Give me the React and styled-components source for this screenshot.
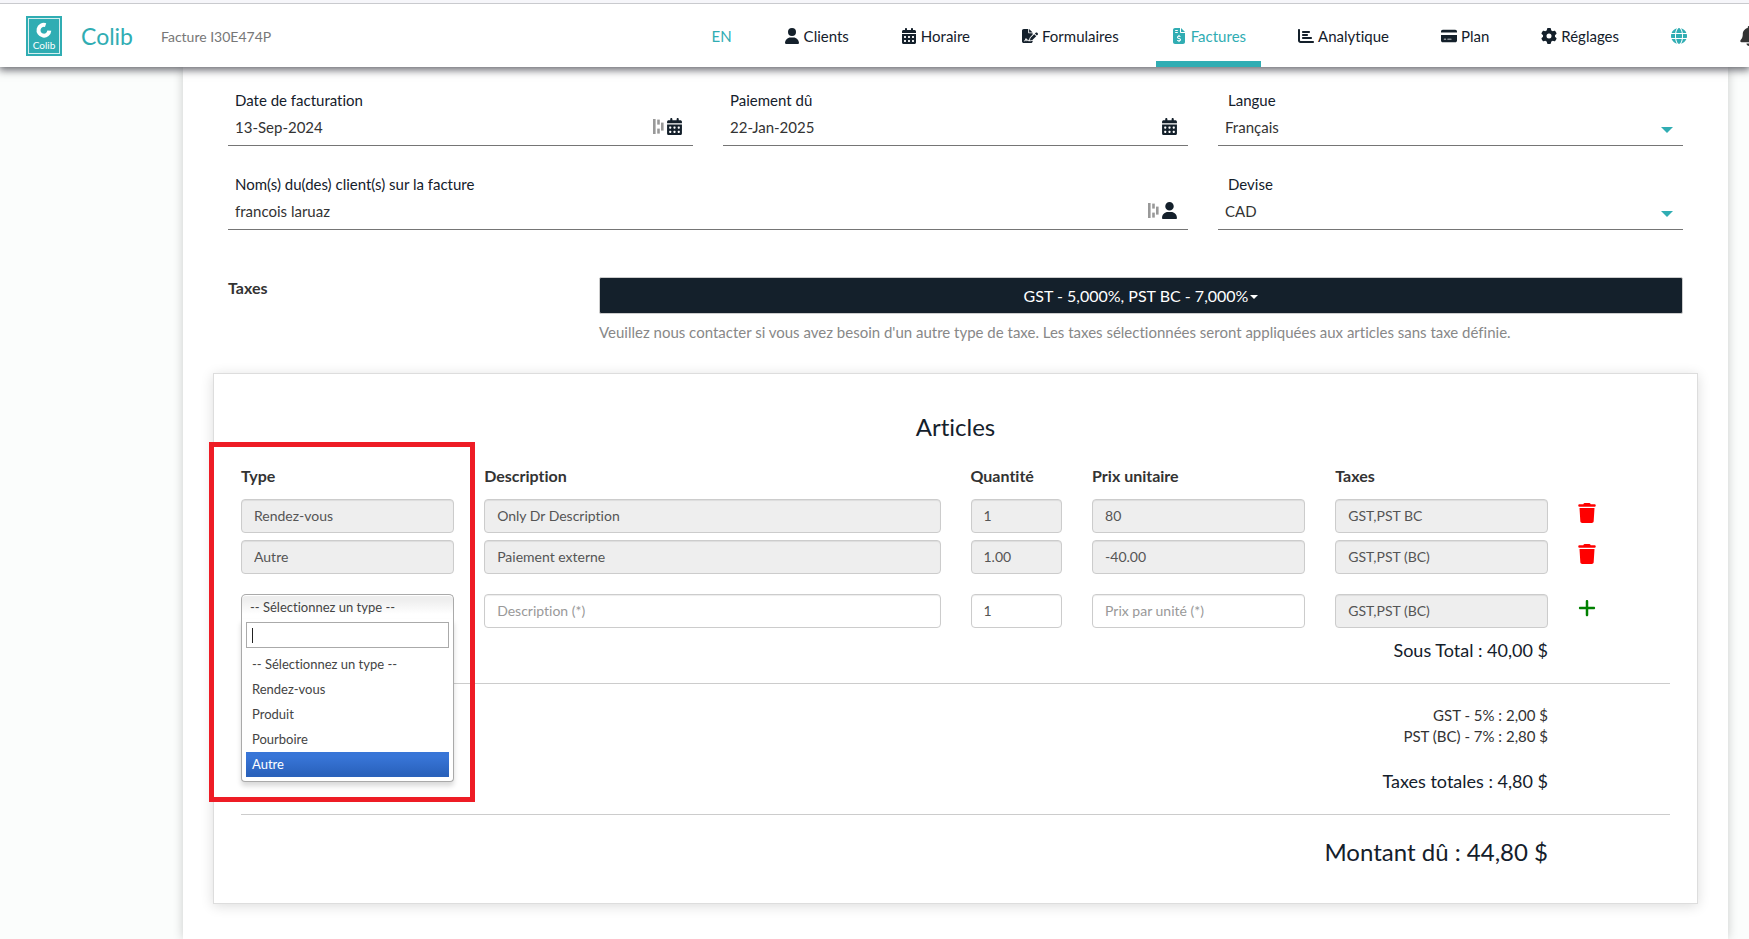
import { useState } from "react";
import styled, { createGlobalStyle } from "styled-components";
import {
  FaBell,
  FaCalendarDays,
  FaChartBar,
  FaCreditCard,
  FaFileInvoiceDollar,
  FaFileSignature,
  FaGear,
  FaGlobe,
  FaPlus,
  FaTrash,
  FaUser,
} from "react-icons/fa6";

const teal = "#30adb3";
const navy = "#14202b";

const GlobalStyle = createGlobalStyle`
  *, *::before, *::after {
    box-sizing: border-box;
  }

  body {
    margin: 0;
    overflow-x: hidden;
    background: #fbfdfc;
    color: #333;
    font-family: Lato, "Liberation Sans", sans-serif;
    font-size: 15px;
    font-variant-ligatures: none;
    line-height: 20px;
  }

  button, input, select {
    font-family: inherit;
    font-variant-ligatures: none;
    margin: 0;
  }
`;

const Page = styled.div`
  display: flex;
  flex-direction: column;
  min-height: 100vh;
  overflow: hidden;
  border-top: 3px solid #f6f6fa;
`;

/* ---------- header ---------- */

const Header = styled.header`
  display: flex;
  align-items: stretch;
  height: 64px;
  padding-left: 26px;
  background: #fff;
  border-top: 1px solid #c9cace;
  box-shadow: 0 2px 8px 1px rgba(20, 20, 30, 0.65);
  z-index: 2;
`;

const Brand = styled.a`
  display: flex;
  align-items: center;
  gap: 19px;
  color: ${teal};
  font-size: 23px;
  text-decoration: none;
`;

const PageTitle = styled.span`
  align-self: center;
  margin-left: 28px;
  padding-top: 2px;
  color: #777;
  font-size: 14px;
`;

const Nav = styled.nav`
  display: flex;
  gap: 22px;
  margin: 0 -25px 0 auto;
`;

const NavLink = styled.a`
  display: flex;
  align-items: center;
  gap: 4px;
  padding: 6px 15px 0;
  border-bottom: 6px solid ${({ $active }) => ($active ? teal : "transparent")};
  color: ${({ $teal, $active }) => ($teal || $active ? teal : navy)};
  font-size: 15px;
  text-decoration: none;

  svg {
    height: 16px;
    width: auto;
  }
`;

const BellLink = styled(NavLink)`
  color: #333;

  svg {
    height: 20px;
  }
`;

/* ---------- invoice form ---------- */

const Panel = styled.main`
  flex: 1;
  margin: 0 21px 0 183px;
  padding: 22px 30px 34px;
  background: #fff;
  box-shadow: 0 0 10px rgba(0, 0, 0, 0.2);
`;

const Fields = styled.div`
  display: grid;
  grid-template-columns: repeat(3, minmax(0, 1fr));
  gap: 27px 30px;
  padding: 0 15px;
`;

const Field = styled.div`
  grid-column: span ${({ $span }) => $span || 1};
  display: flex;
  flex-direction: column;
  border-bottom: 1px solid #757575;

  label {
    padding: 0 ${({ $wide }) => ($wide ? 10 : 7)}px;
    line-height: 22px;
    color: ${navy};
  }
`;

const FieldLine = styled.div`
  display: flex;
  align-items: center;
  gap: 2px;
  height: 34px;
  padding: 0 10px 3px 7px;
  color: ${navy};

  svg {
    flex: none;
  }
`;

const LineInput = styled.input`
  flex: 1;
  min-width: 0;
  height: 31px;
  padding: 0;
  border: 0;
  outline: 0;
  background: transparent;
  color: #333;
  font-size: 15px;
`;

const LineSelect = styled.select`
  flex: 1;
  height: 31px;
  padding: 0;
  border: 0;
  appearance: none;
  background: transparent;
  color: #333;
  font-size: 15px;
`;

const Caret = styled.span`
  margin-top: ${({ $drop }) => $drop || 0}px;
  border: solid transparent;
  border-width: ${({ $size }) => $size}px ${({ $size }) => $size}px 0;
  border-top-color: ${({ $color }) => $color};
`;

const TaxRow = styled.div`
  display: grid;
  grid-template-columns: 341px minmax(0, 1fr);
  column-gap: 30px;
  padding: 47px 15px 0;

  label {
    font-size: 16px;
    font-weight: bold;
    line-height: 22px;
  }
`;

const TaxButton = styled.button`
  display: flex;
  align-items: center;
  justify-content: center;
  gap: 2px;
  width: 100%;
  height: 37px;
  padding: 0 0 1px;
  border: 1px solid #ccc;
  border-radius: 2px;
  background: ${navy};
  color: #fff;
  font-size: 16px;
`;

const Help = styled.p`
  margin: 8px 0 0;
  color: #888;
`;

/* ---------- articles ---------- */

const Card = styled.section`
  position: relative;
  margin-top: 31px;
  padding: 38px 27px 35px;
  border: 1px solid #ddd;
  box-shadow: 0 2px 12px rgba(0, 0, 0, 0.14);
`;

const CardTitle = styled.h2`
  margin: 0 0 24px;
  color: ${navy};
  font-size: 24px;
  font-weight: normal;
  line-height: 30px;
  text-align: center;
`;

const ArticleTable = styled.table`
  display: block;

  thead, tbody {
    display: block;
  }
`;

const ArticleRow = styled.tr`
  display: grid;
  grid-template-columns: repeat(12, minmax(0, 1fr));
  column-gap: 30px;
  margin-bottom: 7px;
  ${({ $isNew }) => $isNew && "margin-top: 20px;"}
`;

const HeadCell = styled.th`
  grid-column: span ${({ $span }) => $span};
  padding: 0 0 6px;
  font-size: 16px;
  line-height: 20px;
  text-align: left;
  white-space: nowrap;
`;

const Cell = styled.td`
  position: relative;
  grid-column: span ${({ $span }) => $span};
  height: 34px;
  padding: 0;
`;

const CellInput = styled.input`
  display: block;
  width: 100%;
  height: 34px;
  padding: 0 12px 2px;
  border: 1px solid #ccc;
  border-radius: 4px;
  background: ${({ disabled }) => (disabled ? "#eee" : "#fff")};
  box-shadow: inset 0 1px 1px rgba(0, 0, 0, 0.075);
  color: #555;
  font-size: 14px;

  &::placeholder {
    color: #999;
    opacity: 1;
  }
`;

const IconButton = styled.button`
  display: block;
  height: 28px;
  padding: 0;
  border: 0;
  background: transparent;
  color: ${({ $color }) => $color};

  svg {
    display: block;
    height: 20px;
    width: 18px;
  }
`;

const Chosen = styled.div`
  position: absolute;
  inset: 0 0 auto;
  z-index: 1;
  color: #444;
  font-size: 13px;
`;

const ChosenButton = styled.button`
  display: block;
  width: 100%;
  height: 25px;
  padding: 0 8px;
  border: 1px solid #aaa;
  border-bottom: 0;
  border-radius: 5px 5px 0 0;
  background: linear-gradient(#eee 20%, #fff 80%);
  box-shadow: inset 0 1px 0 #fff;
  color: #444;
  font-size: 13px;
  text-align: left;
`;

const ChosenDrop = styled.div`
  padding: 3px 4px 4px;
  border: 1px solid #aaa;
  border-top: 0;
  border-radius: 0 0 4px 4px;
  background: #fff;
  box-shadow: 0 4px 5px rgba(0, 0, 0, 0.15);
`;

const ChosenSearch = styled.div`
  display: flex;
  align-items: center;
  height: 26px;
  padding: 0 5px;
  border: 1px solid #aaa;

  &::before {
    content: "";
    height: 15px;
    border-left: 1px solid #222;
  }

  input {
    flex: 1;
    min-width: 0;
    padding: 0;
    border: 0;
    outline: 0;
    font-size: 13px;
    caret-color: transparent;
  }
`;

const ChosenList = styled.ul`
  margin: 4px 0 0;
  padding: 0;
  list-style: none;
`;

const ChosenOption = styled.li`
  padding: 5px 6px;
  line-height: 15px;
  cursor: pointer;
  ${({ $active }) =>
    $active &&
    `
    background: linear-gradient(#3875d7 20%, #2a62bc 90%);
    color: #fff;
  `}
`;

/* red frame drawn over the Type column */
const Highlight = styled.div`
  position: absolute;
  top: 68px;
  left: -5px;
  width: 266px;
  height: 360px;
  border: 5px solid #ee1c25;
  pointer-events: none;
  z-index: 2;
`;

const Totals = styled.div`
  padding-right: 122px;
  margin-bottom: ${({ $gap }) => $gap || 0}px;
  color: ${({ $dark }) => ($dark ? navy : "#333")};
  font-size: ${({ $size }) => $size}px;
  line-height: ${({ $line }) => $line}px;
  text-align: right;
`;

const Rule = styled.hr`
  margin: 18px 0 21px;
  border: 0;
  border-top: 1px solid #ccc;
`;

const navItems = [
  { label: "Clients", icon: FaUser },
  { label: "Horaire", icon: FaCalendarDays },
  { label: "Formulaires", icon: FaFileSignature },
  { label: "Factures", icon: FaFileInvoiceDollar, active: true },
  { label: "Analytique", icon: FaChartBar },
  { label: "Plan", icon: FaCreditCard },
  { label: "Réglages", icon: FaGear },
];

const columns = [
  { key: "type", label: "Type", span: 2 },
  { key: "description", label: "Description", span: 4 },
  { key: "quantity", label: "Quantité", span: 1 },
  { key: "price", label: "Prix unitaire", span: 2 },
  { key: "taxes", label: "Taxes", span: 2 },
];

const articles = [
  { type: "Rendez-vous", description: "Only Dr Description", quantity: "1", price: "80", taxes: "GST,PST BC" },
  { type: "Autre", description: "Paiement externe", quantity: "1.00", price: "-40.00", taxes: "GST,PST (BC)" },
];

const placeholderType = "-- Sélectionnez un type --";
const types = [placeholderType, "Rendez-vous", "Produit", "Pourboire", "Autre"];

const Logo = () => (
  <svg width="36" height="40" viewBox="0 0 36 40" aria-hidden="true">
    <rect width="36" height="40" fill={teal} />
    <rect x="2.5" y="2.5" width="31" height="35" fill="none" stroke="#d5eff0" />
    <path d="M19.6 9.1A5.4 5.4 0 1 0 23.3 14.6" fill="none" stroke="#fff" strokeWidth="4" />
    <text x="18" y="33" fill="#fff" fontSize="10" textAnchor="middle" fontFamily="Lato">
      Colib
    </text>
  </svg>
);

const AutofillMark = () => (
  <svg width="11" height="15" viewBox="0 0 11 15" fill="#999" aria-hidden="true">
    <rect x="0" y="0" width="2.6" height="15" />
    <rect x="4.2" y="0.6" width="2.6" height="5" />
    <rect x="4.2" y="9.6" width="2.6" height="5" />
    <rect x="8" y="3.6" width="2.6" height="8" />
  </svg>
);

const TextField = ({ id, label, value, span, icon: Icon, mark }) => (
  <Field $span={span}>
    <label htmlFor={id}>{label}</label>
    <FieldLine>
      <LineInput id={id} defaultValue={value} />
      {mark && <AutofillMark />}
      <Icon size={17} />
    </FieldLine>
  </Field>
);

const SelectField = ({ id, label, options }) => (
  <Field $wide>
    <label htmlFor={id}>{label}</label>
    <FieldLine>
      <LineSelect id={id}>
        {options.map((option) => (
          <option key={option}>{option}</option>
        ))}
      </LineSelect>
      <Caret $size={6} $color={teal} $drop={6} />
    </FieldLine>
  </Field>
);

const TypePicker = () => {
  const [active, setActive] = useState("Autre");

  return (
    <Chosen>
      <ChosenButton type="button" aria-haspopup="listbox" aria-expanded="true">
        {placeholderType}
      </ChosenButton>
      <ChosenDrop>
        <ChosenSearch>
          <input type="text" aria-label="Rechercher un type" />
        </ChosenSearch>
        <ChosenList role="listbox" aria-label="Type">
          {types.map((type) => (
            <ChosenOption
              key={type}
              role="option"
              aria-selected={type === active}
              $active={type === active}
              onMouseEnter={() => setActive(type)}
            >
              {type}
            </ChosenOption>
          ))}
        </ChosenList>
      </ChosenDrop>
    </Chosen>
  );
};

export default function App() {
  return (
    <Page>
      <GlobalStyle />
      <Header>
        <Brand href="#accueil">
          <Logo />
          Colib
        </Brand>
        <PageTitle>Facture I30E474P</PageTitle>
        <Nav>
          <NavLink href="#en" $teal>
            EN
          </NavLink>
          {navItems.map(({ label, icon: Icon, active }) => (
            <NavLink key={label} href={`#${label.toLowerCase()}`} $active={active}>
              <Icon />
              {label}
            </NavLink>
          ))}
          <NavLink href="#site" $teal aria-label="Site web">
            <FaGlobe />
          </NavLink>
          <BellLink href="#notifications" aria-label="Notifications">
            <FaBell />
          </BellLink>
        </Nav>
      </Header>

      <Panel>
        <Fields>
          <TextField id="date" label="Date de facturation" value="13-Sep-2024" icon={FaCalendarDays} mark />
          <TextField id="due" label="Paiement dû" value="22-Jan-2025" icon={FaCalendarDays} />
          <SelectField id="language" label="Langue" options={["Français", "English"]} />
          <TextField
            id="client"
            label="Nom(s) du(des) client(s) sur la facture"
            value="francois laruaz"
            icon={FaUser}
            span={2}
            mark
          />
          <SelectField id="currency" label="Devise" options={["CAD", "USD", "EUR"]} />
        </Fields>

        <TaxRow>
          <label htmlFor="taxes">Taxes</label>
          <div>
            <TaxButton id="taxes" type="button">
              GST - 5,000%, PST BC - 7,000%
              <Caret $size={4} $color="#fff" $drop={3} />
            </TaxButton>
            <Help>
              Veuillez nous contacter si vous avez besoin d'un autre type de taxe. Les taxes sélectionnées seront
              appliquées aux articles sans taxe définie.
            </Help>
          </div>
        </TaxRow>

        <Card>
          <CardTitle>Articles</CardTitle>
          <ArticleTable>
            <thead>
              <ArticleRow>
                {columns.map(({ key, label, span }) => (
                  <HeadCell key={key} $span={span}>
                    {label}
                  </HeadCell>
                ))}
              </ArticleRow>
            </thead>
            <tbody>
              {articles.map((article) => (
                <ArticleRow key={article.type}>
                  {columns.map(({ key, label, span }) => (
                    <Cell key={key} $span={span}>
                      <CellInput aria-label={label} defaultValue={article[key]} disabled />
                    </Cell>
                  ))}
                  <Cell $span={1}>
                    <IconButton type="button" $color="red" aria-label="Supprimer">
                      <FaTrash />
                    </IconButton>
                  </Cell>
                </ArticleRow>
              ))}
              <ArticleRow $isNew>
                <Cell $span={2}>
                  <TypePicker />
                </Cell>
                <Cell $span={4}>
                  <CellInput aria-label="Description" placeholder="Description (*)" />
                </Cell>
                <Cell $span={1}>
                  <CellInput aria-label="Quantité" defaultValue="1" />
                </Cell>
                <Cell $span={2}>
                  <CellInput aria-label="Prix unitaire" placeholder="Prix par unité (*)" />
                </Cell>
                <Cell $span={2}>
                  <CellInput aria-label="Taxes" defaultValue="GST,PST (BC)" disabled />
                </Cell>
                <Cell $span={1}>
                  <IconButton type="button" $color="green" aria-label="Ajouter">
                    <FaPlus />
                  </IconButton>
                </Cell>
              </ArticleRow>
            </tbody>
          </ArticleTable>

          <Totals $size={18} $line={30} $dark>
            Sous Total : 40,00 $
          </Totals>
          <Rule />
          <Totals $size={15} $line={21} $gap={19}>
            GST - 5% : 2,00 $
            <br />
            PST (BC) - 7% : 2,80 $
          </Totals>
          <Totals $size={18} $line={30} $dark>
            Taxes totales : 4,80 $
          </Totals>
          <Rule />
          <Totals $size={24} $line={32} $dark>
            Montant dû : 44,80 $
          </Totals>
          <Highlight />
        </Card>
      </Panel>
    </Page>
  );
}
